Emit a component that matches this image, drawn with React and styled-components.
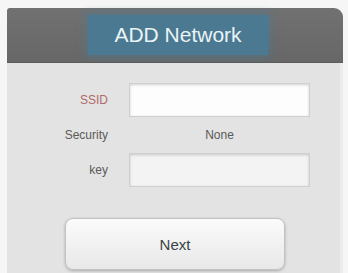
import React from 'react';
import styled, { createGlobalStyle } from 'styled-components';

const GlobalStyle = createGlobalStyle`
  html, body {
    margin: 0;
    padding: 0;
    background: #f6f6f6;
    font-family: "Liberation Sans", Arial, sans-serif;
  }
`;

const Page = styled.div`
  width: 348px;
  height: 273px;
  padding: 8px 5px 0 7px;
  box-sizing: border-box;
  overflow: hidden;
`;

const Panel = styled.div`
  width: 336px;
  display: flex;
  flex-direction: column;
`;

const Header = styled.div`
  height: 55px;
  background: linear-gradient(#717171, #676767);
  border-bottom: 1px solid #5c5c5c;
  border-radius: 3px 9px 0 0;
  display: flex;
  align-items: center;
  justify-content: center;
  padding-left: 6px;
  box-sizing: border-box;
`;

const Title = styled.div`
  width: 180px;
  height: 40px;
  background: #4b7991;
  box-shadow: 0 0 7px 3px rgba(76, 122, 146, 0.55);
  color: #eaf4f6;
  font-size: 21px;
  display: flex;
  align-items: center;
  justify-content: center;
`;

const Body = styled.div`
  height: 210px;
  background: #e3e3e3;
  border-right: 3px solid #ececec;
  padding-top: 20px;
  box-sizing: border-box;
  display: flex;
  flex-direction: column;
`;

const Form = styled.div`
  display: grid;
  grid-template-columns: 101px 181px;
  grid-template-rows: 34px 36px 34px;
  column-gap: 21px;
  align-items: center;
`;

const Label = styled.div`
  text-align: right;
  font-size: 12px;
  color: ${p => (p.$accent ? '#b06a6a' : '#5a5a5a')};
`;

const Value = styled.div`
  text-align: center;
  font-size: 12px;
  color: #5a5a5a;
`;

const Input = styled.div`
  height: 34px;
  box-sizing: border-box;
  background: ${p => (p.$dim ? '#f3f3f3' : '#fdfdfd')};
  border: 1px solid #cfcfcf;
  box-shadow: inset 0 1px 3px rgba(0, 0, 0, 0.18);
`;

const Button = styled.div`
  margin: 31px 0 0 58px;
  width: 220px;
  height: 52px;
  box-sizing: border-box;
  border-radius: 8px;
  border: 1px solid #c2c2c2;
  background: linear-gradient(#fbfbfb, #e8e8e8);
  box-shadow: 0 1px 3px rgba(0, 0, 0, 0.25);
  display: flex;
  align-items: center;
  justify-content: center;
  font-size: 15px;
  color: #3b4446;
`;

export default function App() {
  return (
    <>
      <GlobalStyle />
      <Page>
        <Panel>
          <Header>
            <Title>ADD Network</Title>
          </Header>
          <Body>
            <Form>
              <Label $accent>SSID</Label>
              <Input />
              <Label>Security</Label>
              <Value>None</Value>
              <Label>key</Label>
              <Input $dim />
            </Form>
            <Button>Next</Button>
          </Body>
        </Panel>
      </Page>
    </>
  );
}
